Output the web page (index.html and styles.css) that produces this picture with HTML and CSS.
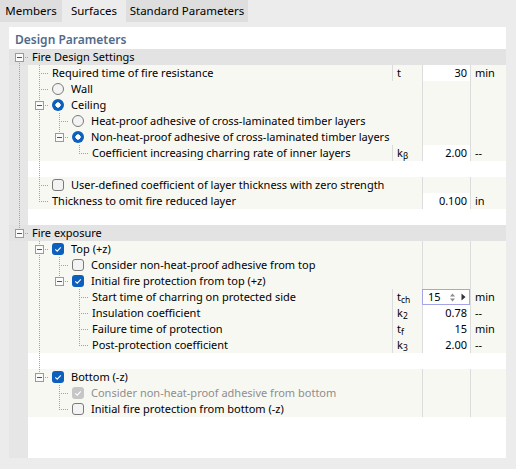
FILE: index.html
```html
<!DOCTYPE html>
<html>
<head>
<meta charset="utf-8">
<link rel="stylesheet" href="styles.css">
</head>
<body>
<div class="tabs">
  <div class="tab w1">Members</div>
  <div class="tab w2 active">Surfaces</div>
  <div class="tab w3">Standard Parameters</div>
</div>
<div class="panel">
  <div class="title">Design Parameters</div>

  <div class="row band">
    <span class="c box-down"><i class="exp"></i></span>
    <span class="name">Fire Design Settings</span>
  </div>

  <div class="row">
    <span class="c pipe"></span><span class="c tee"></span>
    <span class="name">Required time of fire resistance</span>
    <span class="sym on">t</span><span class="val on">30</span><span class="unit">min</span>
  </div>
  <div class="row">
    <span class="c pipe"></span><span class="c tee"></span>
    <span class="radio"></span><span class="name">Wall</span>
    <span class="sym"></span><span class="val"></span><span class="unit"></span>
  </div>
  <div class="row">
    <span class="c pipe"></span><span class="c tee"><i class="exp"></i></span>
    <span class="radio checked"></span><span class="name">Ceiling</span>
    <span class="sym"></span><span class="val"></span><span class="unit"></span>
  </div>
  <div class="row">
    <span class="c pipe"></span><span class="c pipe"></span><span class="c tee"></span>
    <span class="radio"></span><span class="name">Heat-proof adhesive of cross-laminated timber layers</span>
    <span class="sym"></span><span class="val"></span><span class="unit"></span>
  </div>
  <div class="row">
    <span class="c pipe"></span><span class="c pipe"></span><span class="c elbow"><i class="exp"></i></span>
    <span class="radio checked"></span><span class="name">Non-heat-proof adhesive of cross-laminated timber layers</span>
    <span class="sym"></span><span class="val"></span><span class="unit"></span>
  </div>
  <div class="row">
    <span class="c pipe"></span><span class="c pipe"></span><span class="c"></span><span class="c elbow"></span>
    <span class="name">Coefficient increasing charring rate of inner layers</span>
    <span class="sym on">k<sub>β</sub></span><span class="val on">2.00</span><span class="unit">--</span>
  </div>
  <div class="row blank">
    <span class="c pipe"></span><span class="c pipe"></span>
  </div>
  <div class="row">
    <span class="c pipe"></span><span class="c tee"></span>
    <span class="check"></span><span class="name">User-defined coefficient of layer thickness with zero strength</span>
    <span class="sym"></span><span class="val"></span><span class="unit"></span>
  </div>
  <div class="row">
    <span class="c pipe"></span><span class="c elbow"></span>
    <span class="name">Thickness to omit fire reduced layer</span>
    <span class="sym"></span><span class="val on">0.100</span><span class="unit">in</span>
  </div>
  <div class="row blank">
    <span class="c pipe"></span>
  </div>

  <div class="row band">
    <span class="c box-up"><i class="exp"></i></span>
    <span class="name">Fire exposure</span>
  </div>

  <div class="row">
    <span class="c"></span><span class="c tee"><i class="exp"></i></span>
    <span class="check checked"><svg viewBox="0 0 12 12" width="12" height="12"><path d="M3.3 6.3 L5.2 8.1 L8.8 4.3" fill="none" stroke="#fff" stroke-width="1.1"/></svg></span><span class="name">Top (+z)</span>
    <span class="sym"></span><span class="val"></span><span class="unit"></span>
  </div>
  <div class="row">
    <span class="c"></span><span class="c pipe"></span><span class="c tee"></span>
    <span class="check"></span><span class="name">Consider non-heat-proof adhesive from top</span>
    <span class="sym"></span><span class="val"></span><span class="unit"></span>
  </div>
  <div class="row">
    <span class="c"></span><span class="c pipe"></span><span class="c elbow"><i class="exp"></i></span>
    <span class="check checked"><svg viewBox="0 0 12 12" width="12" height="12"><path d="M3.3 6.3 L5.2 8.1 L8.8 4.3" fill="none" stroke="#fff" stroke-width="1.1"/></svg></span><span class="name">Initial fire protection from top (+z)</span>
    <span class="sym"></span><span class="val"></span><span class="unit"></span>
  </div>
  <div class="row">
    <span class="c"></span><span class="c pipe"></span><span class="c"></span><span class="c tee"></span>
    <span class="name">Start time of charring on protected side</span>
    <span class="sym on">t<sub>ch</sub></span>
    <span class="val on input"><span class="in-num">15</span><svg class="spin" width="7" height="9" viewBox="0 0 7 9"><path d="M3.5 0.5 L6 3.5 H1 Z M3.5 8.5 L6 5.5 H1 Z" fill="#8c8c8c"/></svg><svg class="arr" width="5" height="8" viewBox="0 0 5 8"><path d="M0.5 0.5 L4.5 4 L0.5 7.5 Z" fill="#333"/></svg></span>
    <span class="unit">min</span>
  </div>
  <div class="row">
    <span class="c"></span><span class="c pipe"></span><span class="c"></span><span class="c tee"></span>
    <span class="name">Insulation coefficient</span>
    <span class="sym on">k<sub>2</sub></span><span class="val on">0.78</span><span class="unit">--</span>
  </div>
  <div class="row">
    <span class="c"></span><span class="c pipe"></span><span class="c"></span><span class="c tee"></span>
    <span class="name">Failure time of protection</span>
    <span class="sym on">t<sub>f</sub></span><span class="val on">15</span><span class="unit">min</span>
  </div>
  <div class="row">
    <span class="c"></span><span class="c pipe"></span><span class="c"></span><span class="c elbow"></span>
    <span class="name">Post-protection coefficient</span>
    <span class="sym on">k<sub>3</sub></span><span class="val on">2.00</span><span class="unit">--</span>
  </div>
  <div class="row blank">
    <span class="c"></span><span class="c pipe"></span>
  </div>
  <div class="row">
    <span class="c"></span><span class="c elbow"><i class="exp"></i></span>
    <span class="check checked"><svg viewBox="0 0 12 12" width="12" height="12"><path d="M3.3 6.3 L5.2 8.1 L8.8 4.3" fill="none" stroke="#fff" stroke-width="1.1"/></svg></span><span class="name">Bottom (-z)</span>
    <span class="sym"></span><span class="val"></span><span class="unit"></span>
  </div>
  <div class="row">
    <span class="c"></span><span class="c"></span><span class="c tee"></span>
    <span class="check checked disabled"><svg viewBox="0 0 12 12" width="12" height="12"><path d="M3.3 6.3 L5.2 8.1 L8.8 4.3" fill="none" stroke="#fff" stroke-width="1.1"/></svg></span><span class="name dim">Consider non-heat-proof adhesive from bottom</span>
    <span class="sym"></span><span class="val"></span><span class="unit"></span>
  </div>
  <div class="row">
    <span class="c"></span><span class="c"></span><span class="c elbow"></span>
    <span class="check"></span><span class="name">Initial fire protection from bottom (-z)</span>
    <span class="sym"></span><span class="val"></span><span class="unit"></span>
  </div>
  <div class="filler"></div>
</div>
</body>
</html>
```

FILE: styles.css
```css
* { box-sizing: border-box; }
html, body { margin: 0; padding: 0; }
body {
  width: 516px;
  height: 469px;
  background: #ececec;
  font-family: "Noto Sans", "Open Sans", sans-serif;
  font-size: 11px;
  color: #000;
  overflow: hidden;
}
.tabs {
  display: flex;
  gap: 1px;
  height: 22px;
}
.tab {
  height: 22px;
  line-height: 22px;
  text-align: center;
  background: #dedede;
  font-size: 11.5px;
  color: #000;
}
.tab.active { background: #ececec; height: 27px; }
.w1 { width: 62px; }
.w2 { width: 62px; }
.w3 { width: 122px; }
.panel {
  margin: 5px 0 0 9px;
  width: 497px;
  height: 431px;
  background: #fff;
  display: flex;
  flex-direction: column;
}
.title {
  height: 22px;
  padding: 5px 0 0 6px;
  line-height: 16px;
  color: #526a8a;
  font-weight: 600;
  font-size: 12px;
}
.row {
  display: flex;
  height: 16px;
  line-height: 16px;
  white-space: nowrap;
  background: linear-gradient(to right, #e6e6e6 19px, #f8f8f3 19px);
  flex: none;
}
.row.band { background: #e3e3e3; }
.row.blank { background: linear-gradient(to right, #e6e6e6 19px, #fff 19px); }
.c {
  width: 20px;
  height: 16px;
  flex: none;
  display: block;
  background-repeat: no-repeat;
}
.pipe {
  background-image: repeating-linear-gradient(to bottom, #a3a3a3 0 1px, transparent 1px 2px);
  background-size: 1px 16px;
  background-position: 10px 0;
}
.tee {
  background-image:
    repeating-linear-gradient(to bottom, #a3a3a3 0 1px, transparent 1px 2px),
    repeating-linear-gradient(to right, #a3a3a3 0 1px, transparent 1px 2px);
  background-size: 1px 16px, 10px 1px;
  background-position: 10px 0, 10px 8px;
}
.elbow {
  background-image:
    repeating-linear-gradient(to bottom, #a3a3a3 0 1px, transparent 1px 2px),
    repeating-linear-gradient(to right, #a3a3a3 0 1px, transparent 1px 2px);
  background-size: 1px 9px, 10px 1px;
  background-position: 10px 0, 10px 8px;
}
.box-down {
  background-image:
    repeating-linear-gradient(to bottom, #a3a3a3 0 1px, transparent 1px 2px),
    repeating-linear-gradient(to right, #a3a3a3 0 1px, transparent 1px 2px);
  background-size: 1px 8px, 10px 1px;
  background-position: 10px 8px, 10px 8px;
}
.box-up {
  background-image:
    repeating-linear-gradient(to bottom, #a3a3a3 0 1px, transparent 1px 2px),
    repeating-linear-gradient(to right, #a3a3a3 0 1px, transparent 1px 2px);
  background-size: 1px 9px, 10px 1px;
  background-position: 10px 0, 10px 8px;
}
.exp {
  display: block;
  width: 9px;
  height: 9px;
  margin: 4px 0 0 6px;
  border: 1px solid #9a9a9a;
  background: linear-gradient(#555, #555) center / 5px 1px no-repeat, #fafafa;
}
.name {
  flex: 1;
  padding-left: 3px;
  overflow: hidden;
}
.name.dim { color: #8e8e8e; }
.radio, .check {
  flex: none;
  width: 12px;
  height: 12px;
  margin: 2px 4px 0 3px;
  border: 1px solid #7a7a7a;
  background: #f3f3f3;
}
.radio { border-radius: 50%; }
.radio.checked {
  border: none;
  background: radial-gradient(circle at 6px 6px, #fff 0 2.4px, #0c5fbd 2.9px);
}
.check { border-radius: 3px; }
.check svg { display: block; }
.check.checked {
  border: none;
  background: #0c5fbd;
}
.check.checked.disabled { background: #c6c6c6; }
.sym {
  width: 30px;
  flex: none;
  padding-left: 4px;
  border-left: 1px solid transparent;
}
.sym.on { border-left-color: #dcdcdc; }
.sym sub { font-size: 8.5px; vertical-align: -2px; line-height: 0; }
.val {
  width: 48px;
  flex: none;
  border-left: 1px solid #dcdcdc;
  text-align: right;
  padding-right: 3px;
}
.val.on { background: #fff; }
.val.input {
  display: flex;
  align-items: center;
  border: 1px solid #a4a4e6;
  padding: 0 3px 0 5px;
  text-align: left;
}
.in-num { flex: 1; }
.spin { margin-right: 5px; }
.unit {
  width: 36px;
  flex: none;
  border-left: 1px solid #dcdcdc;
  padding-left: 4px;
}
.filler {
  flex: 1;
  background: linear-gradient(to right, #e6e6e6 19px, #fff 19px);
}
```
